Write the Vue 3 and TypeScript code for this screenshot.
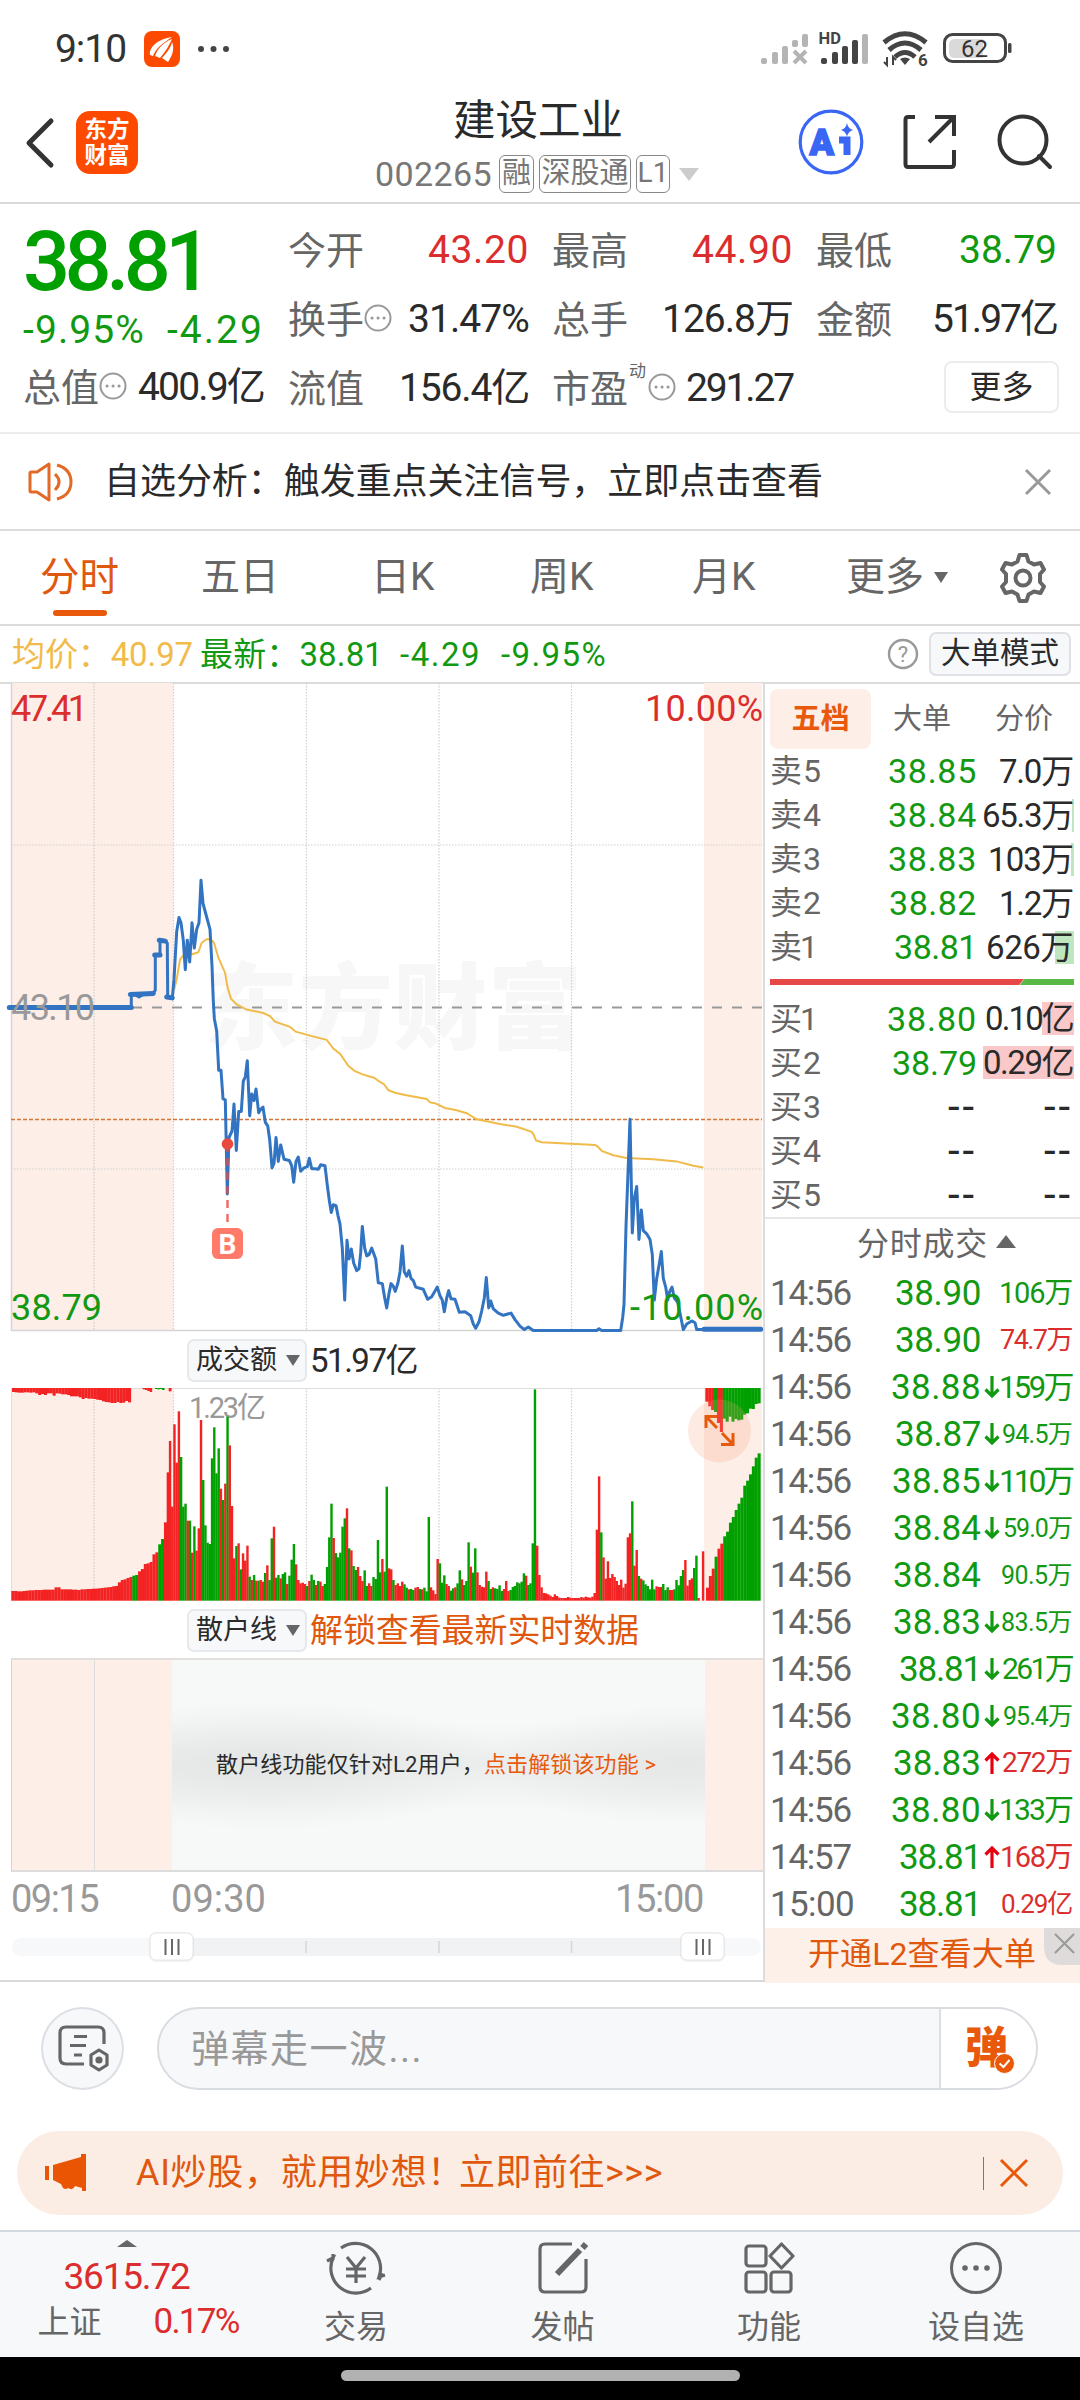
<script setup lang="ts">
import type { Directive } from 'vue'

type Tone = 'up' | 'down' | 'ink'

// Tracks a label out (or in) until it occupies the given width.
const vFit: Directive<HTMLElement, number> = {
  mounted(el, { value }) {
    const range = document.createRange()
    range.selectNodeContents(el)
    const width = range.getBoundingClientRect().width
    const count = (el.textContent ?? '').length
    el.style.letterSpacing = `${((value - width) / count).toFixed(3)}px`
  },
}

interface Stat { label: string; value: string; w: number; tone: Tone; dots?: boolean }
const stats: Stat[] = [
  { label: '今开', value: '43.20', w: 101, tone: 'up' },
  { label: '最高', value: '44.90', w: 101, tone: 'up' },
  { label: '最低', value: '38.79', w: 98, tone: 'down' },
  { label: '换手', value: '31.47%', w: 121, tone: 'ink', dots: true },
  { label: '总手', value: '126.8万', w: 131, tone: 'ink' },
  { label: '金额', value: '51.97亿', w: 125, tone: 'ink' },
]

const tabs = ['分时', '五日', '日K', '周K', '月K', '更多']

interface Level { name: string; price: string; pw: number; vol: string; vw: number; bar: number }
const asks: Level[] = [
  { name: '卖5', price: '38.85', pw: 89, vol: '7.0万', vw: 74, bar: 0 },
  { name: '卖4', price: '38.84', pw: 89, vol: '65.3万', vw: 91, bar: 2 },
  { name: '卖3', price: '38.83', pw: 89, vol: '103万', vw: 85, bar: 3 },
  { name: '卖2', price: '38.82', pw: 88, vol: '1.2万', vw: 74, bar: 0 },
  { name: '卖1', price: '38.81', pw: 83, vol: '626万', vw: 87, bar: 19 },
]
const bids: Level[] = [
  { name: '买1', price: '38.80', pw: 90, vol: '0.10亿', vw: 88, bar: 32 },
  { name: '买2', price: '38.79', pw: 85, vol: '0.29亿', vw: 90, bar: 91 },
  { name: '买3', price: '--', pw: 29, vol: '--', vw: 29, bar: 0 },
  { name: '买4', price: '--', pw: 29, vol: '--', vw: 29, bar: 0 },
  { name: '买5', price: '--', pw: 29, vol: '--', vw: 29, bar: 0 },
]

interface Deal { t: string; p: string; pw: number; dir: '' | 'u' | 'd'; v: string; vw: number; s: number; tone: Tone }
const deals: Deal[] = [
  { t: '14:56', p: '38.90', pw: 86, dir: '', v: '106万', vw: 73, s: 29, tone: 'down' },
  { t: '14:56', p: '38.90', pw: 86, dir: '', v: '74.7万', vw: 72, s: 27, tone: 'up' },
  { t: '14:56', p: '38.88', pw: 90, dir: 'd', v: '159万', vw: 73, s: 31, tone: 'down' },
  { t: '14:56', p: '38.87', pw: 86, dir: 'd', v: '94.5万', vw: 70, s: 25, tone: 'down' },
  { t: '14:56', p: '38.85', pw: 89, dir: 'd', v: '110万', vw: 73, s: 32, tone: 'down' },
  { t: '14:56', p: '38.84', pw: 88, dir: 'd', v: '59.0万', vw: 69, s: 25, tone: 'down' },
  { t: '14:56', p: '38.84', pw: 88, dir: '', v: '90.5万', vw: 71, s: 25, tone: 'down' },
  { t: '14:56', p: '38.83', pw: 88, dir: 'd', v: '83.5万', vw: 71, s: 25, tone: 'down' },
  { t: '14:56', p: '38.81', pw: 82, dir: 'd', v: '261万', vw: 70, s: 30, tone: 'down' },
  { t: '14:56', p: '38.80', pw: 90, dir: 'd', v: '95.4万', vw: 69, s: 25, tone: 'down' },
  { t: '14:56', p: '38.83', pw: 88, dir: 'u', v: '272万', vw: 70, s: 28, tone: 'up' },
  { t: '14:56', p: '38.80', pw: 90, dir: 'd', v: '133万', vw: 73, s: 30, tone: 'down' },
  { t: '14:57', p: '38.81', pw: 82, dir: 'u', v: '168万', vw: 72, s: 29, tone: 'up' },
  { t: '15:00', p: '38.81', pw: 82, dir: '', v: '0.29亿', vw: 71, s: 26, tone: 'up' },
]

// Intraday samples live on a fine integer grid; toPath maps them to chart pixels.
const KX = 3
const KY = 2.306
const toPath = (src: string): string =>
  src.trim().split(/\s+/).map((p, i) => {
    const [x, y] = p.split(',').map(Number)
    return `${i ? 'L' : 'M'}${(x / KX).toFixed(1)} ${(y / KY - 3).toFixed(1)}`
  }).join('')

const pricePath = toPath(`28,755 394,755 394,725 405,725 417,731 430,725 460,722 466,715 466,634 480,634 480,600 492,600
502,607 503,730 517,735 522,690 530,580 537,548 543,560 550,600 556,668 562,600 569,650 576,560 583,618 590,575 597,560
603,462 609,515 616,535 630,575 636,660 640,740 643,780 650,810 656,900 663,900 669,966 676,968 682,1185 687,1055 696,1040
702,978 709,1085 716,995 724,995 730,925 736,915 742,878 749,1005 755,955 762,970 768,943 776,998 782,990 789,985 796,1020
803,1028 809,1060 816,1125 822,1115 828,1055 835,1110 842,1072 852,1105 868,1108 875,1120 881,1158 888,1110 895,1100
902,1133 912,1125 922,1122 928,1103 935,1127 945,1127 955,1128 962,1118 975,1120 982,1165 988,1200 994,1228 1000,1210
1008,1212 1014,1235 1020,1255 1027,1310 1034,1430 1041,1292 1047,1335 1054,1312 1061,1345 1070,1362 1077,1358 1082,1320
1087,1260 1094,1310 1100,1328 1107,1325 1115,1310 1127,1335 1135,1390 1147,1392 1154,1425 1160,1448 1167,1415 1173,1392
1180,1398 1186,1410 1194,1390 1200,1365 1207,1305 1213,1365 1220,1375 1227,1362 1233,1380 1240,1385 1247,1400 1270,1405
1283,1428 1295,1422 1312,1400 1320,1420 1327,1430 1333,1457 1340,1425 1346,1408 1353,1427 1365,1428 1378,1458 1395,1457
1412,1466 1420,1485 1427,1495 1437,1480 1445,1455 1453,1425 1459,1378 1466,1448 1472,1432 1480,1450 1495,1460 1510,1465
1533,1460 1545,1475 1560,1490 1573,1498 1585,1492 1600,1500 1790,1500 1797,1496 1805,1500 1862,1500 1868,1470 1872,1440
1878,1260 1890,1013 1897,1275 1903,1195 1910,1168 1917,1290 1924,1222 1930,1270 1940,1277 1950,1290 1957,1325 1963,1430
1970,1380 1977,1350 1984,1318 1990,1380 1997,1400 2003,1430 2009,1410 2016,1400 2023,1425 2033,1435 2040,1460 2050,1498
2060,1485 2075,1478 2085,1482 2090,1498 2112,1498 2283,1498`)
const auctionPath = toPath('28,755 394,755') + toPath('391,725 460,723') + toPath('464,634 480,634') +
  toPath('478,600 496,602') + toPath('500,731 517,733') + toPath('2112,1497 2282,1497')
const avgPath = toPath(`522,715 530,690 540,645 550,635 575,633 595,628 605,606 620,598 632,598 642,606 655,640 675,675
683,710 693,735 710,748 740,760 790,768 810,775 825,788 870,800 887,811 930,820 980,830 1000,850 1020,862 1045,890
1065,902 1090,910 1122,917 1140,927 1152,932 1165,946 1185,952 1215,957 1280,966 1290,974 1305,976 1335,987 1370,992
1400,999 1430,1013 1500,1024 1550,1030 1595,1042 1602,1050 1608,1062 1625,1066 1785,1072 1793,1076 1805,1086 1840,1096
1880,1102 1960,1105 2030,1110 2080,1120 2110,1124`)

interface Bar { x: number; w: number; y: number; h: number; fill: string }
const RED = '#f32323'
const GREEN = '#00a000'
const BASE = 812
const TOP = 174
function bars(src: string, start: number, pitch: number, hanging = false): Bar[] {
  return src.trim().split(/\s+/).map((code, i) => {
    const v = Number(code.slice(1))
    return {
      x: (start + i * pitch) / 3,
      w: pitch / 3 + 0.2,
      y: hanging ? 0 : (v - TOP) / 3,
      h: (hanging ? v - TOP : BASE - v) / 3,
      fill: code[0] === 'r' ? RED : GREEN,
    }
  })
}
const volume: Bar[] = [
  ...bars(`r783 r783 r784 r784 r783 r782 r781 r781 r780 r780 r780 r779 r779 r779 r779 r772 r772 r778 r778 r778 r778 r779
  r779 r780 r778 r778 r777 r777 r776 r776 r775 r774 r773 r772 r771 r769 r768 r757 r750 r748 r744 r741 g737 g735 r724 r717
  r702 r700 r696 r673 r667 g643 g627 r577`, 34, 8.64),
  ...bars('r427 r333 r530', 500, 6.6),
  ...bars(`r283 r398 r244 g381 g530 g521 r572 g572 r668 g589 r662 r595 r270 g450 g586 g638 g642 g385 g292 g430 g355 r476
  g510 r461 g260 r346 r528 r685 g648 r640 g718 r670 r692 r647 g740 r750 g735 r752 g752 r750 r755 g729 r706 g750 g625 r590
  g743 g735 r745 g732 g727 r762 g737 g689 g642 r703 r750 r760 r758 r762 g768 r753 g734 g750 r765 g753 r755 r768 g762 g711
  g622 g521 r624 g669 g682 g668 g590 g565 r535 g655 r661 g708 g720 r711 r738 r753 g721 g768 r760 r768 g741 g747 g630 g727
  r687 g725 g470 r715 r718 g750 r765 r760 r768 r755 g763 g773 r778 g777 g780 r773 r771 g777 r778 g773 g784 g561 r772 r781
  r792 r687 g700 g758 g736 r762 r768 g782 g775 r772 g760 g721 r748 g765 g753 g637 r710 g728 g655 r727 r765 r770 r772 r725
  g753 g777 r772 g775 g777 g766 g783 r777 r753 r783 g780 g771 g768 g757 g760 g755 g730 r737 g765 g760 g640 g178 r647 r735
  r772 r789 r790 r793 r797 r801 r793 r798 r803 r804 r804 r804 r801 r803 r804 r804 r804 r804 r801 r803 r800 r802 r803 r800
  r789 r599 r439 g607 r682 r746 r694 r744 r732 r741 r753 r765 r749 r773 r761 r622 r610 g514 r707 r660 g738 r746 g751 g763
  g768 g778 g749 g778 r769 r771 r771 g762 g780 g772 r780 r780 g778 g750 g766 g738 g720 r690 r767 r750 r745 g714 g677 r804
  r812 r664`, 519.8, 6.635),
  ...bars(`r773 r738 r716 g680 r656 r641 g619 g605 g578 g561 g540 g521 g503 g467 g452 g433 g409 g383 g370`, 2118, 8.6),
  ...bars(`r186 r187 r188 r188 r187 r187 r188 r187 r190 r195 r192 r195 r190 r190 r197 r190 r191 r193 r193 r195 r199 r199
  r199 r202 r207 r204 r206 r206 r207 r209 r210 r214 r216 r217 r219 r219 r216 r219 r218 r213 r217`, 36, 8.7, true),
  ...bars('r178 r180 r183 r186', 428, 7, true),
  ...bars('g177 g178 g177 g180', 465, 7, true),
  ...bars('r184', 506, 8, true),
  ...bars(`r215 r229 r240 g246 r279 r306 g266 g275 g260 g275 g267 g271 g269 g254 g250 g236 g237 g222 g220`, 2116, 8.7, true),
]
</script>

<template>
  <div class="page">
    <div class="status">
      <span v-fit="71" class="clock">9:10</span>
      <svg class="app-badge" width="36" height="36" viewBox="0 0 36 36">
        <rect width="36" height="36" rx="8" fill="#fe4a00" />
        <path d="M6 24C5 16 14 8 28 6C19 12 12 17 9 25Z" fill="#fff" />
        <path d="M11 25C13 18 20 11 28 8C25 15 21 21 16 27Z" fill="#fff" />
        <path d="M18 27C23 22 27 16 28 11C31 18 28 25 24 31Z" fill="#fff" />
      </svg>
      <svg class="ell" width="33" height="8" viewBox="0 0 33 8" fill="#444"><circle cx="4" cy="4" r="3" /><circle cx="16.500" cy="4" r="3" /><circle cx="29" cy="4" r="3" /></svg>
      <span class="grow"></span>
      <svg width="256" height="50" viewBox="760 25 256 50">
        <g fill="#b4b4b4">
          <rect x="761" y="59" width="6" height="6" rx="2" /><rect x="772" y="53" width="6" height="12" rx="2" />
          <rect x="782" y="47" width="6" height="18" rx="2" /><rect x="792" y="41" width="6" height="7" rx="2" />
          <rect x="802" y="35" width="6" height="13" rx="2" />
          <path d="M794 52L806 64M806 52L794 64" stroke="#b4b4b4" stroke-width="4" />
        </g>
        <text x="818.500" y="45" font-size="16.500" font-weight="700" fill="#444">HD</text>
        <g fill="#444">
          <rect x="821" y="59" width="6" height="6" rx="2" /><rect x="832" y="53" width="6" height="12" rx="2" />
          <rect x="842" y="47" width="6" height="18" rx="2" /><rect x="852" y="41" width="6" height="24" rx="2" />
        </g>
        <rect x="862" y="35" width="6" height="30" rx="2" fill="#b4b4b4" />
        <g fill="none" stroke="#444" stroke-width="5">
          <path d="M884 43.500Q905 26 926 43.500" /><path d="M889 51Q905 37 921 51" /><path d="M895 58Q905 49 915 58" />
        </g>
        <path d="M905 66L900 60Q905 57 910 60Z" fill="#444" />
        <path d="M887 58V66L884 63M893 66V58L896 61" fill="none" stroke="#444" stroke-width="2" />
        <text x="918" y="67" font-size="17" font-weight="700" fill="#444">6</text>
        <rect x="944.500" y="35.500" width="61" height="27" rx="8" fill="none" stroke="#444" stroke-width="3" />
        <path d="M949 46Q949 40 955 40H983V59H955Q949 59 949 53Z" fill="#dadada" />
        <rect x="1008" y="44" width="3.500" height="10" rx="1.500" fill="#444" />
        <text x="961" y="57.500" font-size="24" fill="#333" textLength="27">62</text>
      </svg>
    </div>

    <header class="head">
      <svg class="back" width="32" height="54" viewBox="0 0 32 54"><path d="M28 5L6 27L28 49" fill="none" stroke="#333" stroke-width="5" stroke-linecap="round" stroke-linejoin="round" /></svg>
      <div class="brand"><span>东方</span><span>财富</span></div>
      <div class="title">
        <div class="name">建设工业</div>
        <div class="sub">
          <span v-fit="117" class="code">002265</span>
          <span class="tag t1">融</span><span class="tag t2">深股通</span><span class="tag t3">L1</span>
          <i class="tri-down light"></i>
        </div>
      </div>
      <div class="tools">
        <svg width="66" height="66" viewBox="0 0 66 66">
          <circle cx="33" cy="33" r="30.800" fill="#fff" stroke="#3a66f5" stroke-width="3.200" />
          <text x="11.500" y="46" font-size="36" font-weight="900" fill="#3a66f5" stroke="#3a66f5" stroke-width="1.500">A</text>
          <path d="M41 31H49V46" fill="none" stroke="#3a66f5" stroke-width="7" />
          <path d="M49 14Q50 19.500 55 21Q50 22.500 49 28Q48 22.500 43 21Q48 19.500 49 14Z" fill="#3a66f5" />
        </svg>
        <svg class="share" width="54" height="56" viewBox="0 0 54 56" fill="none" stroke="#333" stroke-width="4">
          <path d="M12 3H5Q2.500 3 2.500 6V50Q2.500 53 5 53H48Q51 53 51 50V36" /><path d="M32 3H51V22M51 3L26 28" />
        </svg>
        <svg width="56" height="56" viewBox="0 0 56 56" fill="none" stroke="#333" stroke-width="4"><circle cx="26" cy="26" r="23.500" /><path d="M42 42L53 53" stroke-linecap="round" /></svg>
      </div>
    </header>

    <section class="quote">
      <div class="last">
        <div v-fit="184" class="big">38.81</div>
        <div class="chg"><span v-fit="122">-9.95%</span><span v-fit="97">-4.29</span></div>
        <div class="cell">
          <span class="lab">总值</span><svg class="more-dots" viewBox="0 0 28 28"><circle cx="14" cy="14" r="12.500" /><path d="M8 14h.1M14 14h.1M20 14h.1" /></svg>
          <span class="grow"></span><span v-fit="126" class="ink">400.9亿</span>
        </div>
      </div>
      <div class="stats">
        <div v-for="s in stats" :key="s.label" class="cell">
          <span class="lab">{{ s.label }}</span>
          <svg v-if="s.dots" class="more-dots" viewBox="0 0 28 28"><circle cx="14" cy="14" r="12.500" /><path d="M8 14h.1M14 14h.1M20 14h.1" /></svg>
          <span class="grow"></span><span v-fit="s.w" :class="s.tone">{{ s.value }}</span>
        </div>
        <div class="cell"><span class="lab">流值</span><span class="grow"></span><span v-fit="130" class="ink">156.4亿</span></div>
        <div class="cell">
          <span class="lab">市盈</span><sup>动</sup><svg class="more-dots" viewBox="0 0 28 28"><circle cx="14" cy="14" r="12.500" /><path d="M8 14h.1M14 14h.1M20 14h.1" /></svg>
          <span class="grow"></span><span v-fit="107" class="ink">291.27</span>
        </div>
        <div class="cell end"><button class="more">更多</button></div>
      </div>
    </section>

    <section class="notice">
      <svg width="46" height="40" viewBox="0 0 46 40" fill="none" stroke="#e26a26" stroke-width="3">
        <path d="M2 11V29Q2 30 3.500 30H9L21 38V2L9 10H3.500Q2 10 2 11Z" stroke-linejoin="round" /><path d="M27 12Q35 20 27 28M29 3Q43 7 43 20Q43 33 29 37" />
      </svg>
      <span v-fit="719" class="msg">自选分析：触发重点关注信号，立即点击查看</span>
      <svg class="x" width="28" height="28" viewBox="0 0 28 28"><path d="M2 2L26 26M26 2L2 26" stroke="#999" stroke-width="3" /></svg>
    </section>

    <nav class="tabs">
      <span v-for="(t, i) in tabs" :key="t" class="tab" :class="{ on: i === 0 }">{{ t }}<i v-if="i === 5" class="tri-down"></i></span>
      <svg width="52" height="52" viewBox="0 0 52 52" fill="none" stroke="#666" stroke-width="4" stroke-linejoin="round">
        <path d="M22.500 3H29.500L31.500 9.500L37 12.500L43.500 11L47 17.500L43 22V30L47 34.500L43.500 41L37 39.500L31.500 42.500L29.500 49H22.500L20.500 42.500L15 39.500L8.500 41L5 34.500L9 30V22L5 17.500L8.500 11L15 12.500L20.500 9.500Z" /><circle cx="26" cy="26" r="7.500" />
      </svg>
    </nav>

    <section class="info">
      <span v-fit="181" class="avg">均价：40.97</span>
      <span v-fit="183" class="down b1">最新：38.81</span>
      <span v-fit="81" class="down b2">-4.29</span>
      <span v-fit="106" class="down b3">-9.95%</span>
      <span class="grow"></span>
      <svg width="32" height="32" viewBox="0 0 32 32"><circle cx="16" cy="16" r="14" fill="none" stroke="#999" stroke-width="2.400" /><text x="16" y="24" font-size="22" text-anchor="middle" fill="#999">?</text></svg>
      <button class="mode">大单模式</button>
    </section>

    <main class="body">
      <div class="left">
        <svg class="block" width="763" height="650" viewBox="0 -1 763 650">
          <rect x="11" y="0" width="162" height="647" fill="#fdeee7" /><rect x="704" y="0" width="58" height="647" fill="#fdeee7" />
          <text x="204" y="359" font-size="94" font-weight="900" fill="#f7f7f7" textLength="378">东方财富</text>
          <g stroke="#cfcfcf" stroke-width="1.200" stroke-dasharray="1.500 1.500">
            <path d="M94 0V647M173.500 0V647M306.500 0V647M439 0V647M571.500 0V647M11 162H762M11 486H762" />
          </g>
          <path d="M11.500 0V648M11 647.500H763" stroke="#d5d5d5" stroke-width="1.500" />
          <path d="M132 324.500H762" stroke="#999" stroke-width="2" stroke-dasharray="10 10" />
          <path d="M11 436.500H762" stroke="#d4763a" stroke-width="1.500" stroke-dasharray="4 2" />
          <path :d="avgPath" fill="none" stroke="#f0bb4b" stroke-width="2" />
          <path :d="pricePath" fill="none" stroke="#3274c2" stroke-width="3" stroke-linejoin="round" />
          <path :d="auctionPath" fill="none" stroke="#3274c2" stroke-width="5" stroke-linecap="round" />
          <path d="M227.500 461V539" stroke="#ea4a3c" stroke-opacity=".8" stroke-width="2.500" stroke-dasharray="8 6" />
          <circle cx="227.500" cy="461" r="5.800" fill="#ea4a3c" />
          <rect x="212" y="545" width="31" height="31" rx="6" fill="#ff7a68" />
          <text x="227.500" y="571" font-size="28" font-weight="700" fill="#fff" text-anchor="middle">B</text>
          <g font-size="36">
            <text x="11" y="38" fill="#db2d2d" textLength="77">47.41</text><text x="645" y="38" fill="#db2d2d" textLength="118">10.00%</text>
            <text x="11" y="337" fill="#999" textLength="84">43.10</text>
            <text x="11" y="637" fill="#129912" textLength="91">38.79</text><text x="630" y="637" fill="#129912" textLength="133">-10.00%</text>
          </g>
        </svg>
        <div class="bar-head"><button class="pick">成交额<i class="tri-down"></i></button><span v-fit="107" class="ink">51.97亿</span></div>
        <svg class="block" width="763" height="214" viewBox="0 0 763 214">
          <rect x="11" y="0" width="162" height="213" fill="#fdeee7" /><rect x="704" y="0" width="58" height="213" fill="#fdeee7" />
          <path d="M94 0V213M173.500 0V213M306.500 0V213M439 0V213M571.500 0V213" stroke="#cfcfcf" stroke-width="1.200" stroke-dasharray="1.500 1.500" />
          <path d="M11 .5H762M11.500 0V213" stroke="#ddd" />
          <text x="189" y="30" font-size="29" fill="#999" textLength="77">1.23亿</text>
          <rect v-for="(b, i) in volume" :key="i" :x="b.x" :y="b.y" :width="b.w" :height="b.h" :fill="b.fill" />
          <circle cx="719.500" cy="43" r="31.500" fill="#f7a17c" fill-opacity=".22" />
          <path d="M717 28.500H706V40M706 28.500L717 40M722 45L733 56.500M733 45V56.500H721" fill="none" stroke="#e65a0c" stroke-width="3" />
        </svg>
        <div class="bar-head"><button class="pick">散户线<i class="tri-down"></i></button><span v-fit="329" class="unlock">解锁查看最新实时数据</span></div>
        <div class="locked">
          <i class="pink a"></i>
          <p><span v-fit="268">散户线功能仅针对L2用户，</span><b v-fit="172">点击解锁该功能 &gt;</b></p>
          <i class="pink b"></i>
        </div>
        <div class="axis"><span v-fit="87">09:15</span><span v-fit="95" class="mid">09:30</span><span v-fit="88" class="endt">15:00</span></div>
        <svg class="block" width="763" height="60" viewBox="0 1921 763 60">
          <rect x="12" y="1938" width="749" height="18" rx="9" fill="#f7f8fa" /><rect x="172" y="1938" width="532" height="18" fill="#f1f2f4" />
          <path d="M306 1941V1953M439 1941V1953M571.500 1941V1953" stroke="#d5d6d9" stroke-width="1.500" />
          <g v-for="x in [150, 681]" :key="x">
            <rect :x="x - 1" y="1932" width="45" height="30" rx="7" fill="#000" fill-opacity=".05" />
            <rect :x="x" y="1933" width="43" height="27" rx="6" fill="#fff" stroke="#e6e6e8" />
            <path :d="`M${x + 15.5} 1939V1955M${x + 22} 1939V1955M${x + 28.5} 1939V1955`" stroke="#666" stroke-width="2" />
          </g>
        </svg>
      </div>

      <aside class="right">
        <div class="seg"><b>五档</b><span>大单</span><span>分价</span></div>
        <div class="book">
          <div v-for="l in asks" :key="l.name" class="lv">
            <span v-fit="l.name === '卖1' ? 46 : 52" class="lab2">{{ l.name }}</span><span v-fit="l.pw" class="pr down">{{ l.price }}</span>
            <i class="depth g" :style="{ width: l.bar + 'px' }"></i><span v-fit="l.vw" class="vo">{{ l.vol }}</span>
          </div>
        </div>
        <svg class="ratio" width="304" height="6" viewBox="0 0 304 6"><path d="M0 0H254L249 6H0Z" fill="#e64747" /><path d="M254.500 0H304V6H249.500Z" fill="#5ab946" /></svg>
        <div class="book">
          <div v-for="l in bids" :key="l.name" class="lv">
            <span v-fit="l.name === '买1' ? 46 : 52" class="lab2">{{ l.name }}</span><span v-fit="l.pw" class="pr" :class="l.price === '--' ? 'ink dash' : 'down'">{{ l.price }}</span>
            <i class="depth r" :style="{ width: l.bar + 'px' }"></i><span v-fit="l.vw" class="vo" :class="{ dash: l.vol === '--' }">{{ l.vol }}</span>
          </div>
        </div>
        <div class="deal-head"><span v-fit="131">分时成交</span><i class="tri-up"></i></div>
        <div v-for="(d, i) in deals" :key="i" class="deal">
          <span v-fit="d.t === '15:00' ? 84 : 81" class="tm">{{ d.t }}</span><span v-fit="d.pw" class="pr down">{{ d.p }}</span>
          <svg width="18" height="24" viewBox="0 0 18 24" fill="none" stroke-width="3.200">
            <path v-if="d.dir === 'd'" d="M9 1V21M2.500 14.500L9 21L15.500 14.500" stroke="#129912" />
            <path v-if="d.dir === 'u'" d="M9 23V3M2.500 9.500L9 3L15.500 9.500" stroke="#e60012" />
          </svg>
          <span v-fit="d.vw" class="dv" :class="d.tone" :style="{ fontSize: d.s + 'px' }">{{ d.v }}</span>
        </div>
        <div class="promo"><span v-fit="228">开通L2查看大单</span>
          <svg class="promo-x" width="36" height="37" viewBox="0 0 36 37"><path d="M0 0H36V37H18Q0 37 0 18Z" fill="#dedbda" /><path d="M11 6L30 25M30 6L11 25" stroke="#999" stroke-width="2" /></svg>
        </div>
      </aside>
    </main>

    <section class="chat">
      <div class="round">
        <svg width="54" height="50" viewBox="0 0 54 50" fill="none" stroke="#666" stroke-width="3.200">
          <path d="M47 20V9Q47 3 41 3H9Q3 3 3 9V34Q3 40 9 40H27" /><path d="M17 12.500H30M13 21.500H29M17 31H25" />
          <path d="M42 26L50 31V41L42 46L34 41V31Z" stroke-linejoin="round" /><circle cx="42" cy="36" r="2" fill="#666" />
        </svg>
      </div>
      <div class="field">
        <span v-fit="232" class="ph">弹幕走一波...</span>
        <span class="send"><b>弹</b><svg width="21" height="21" viewBox="0 0 21 21"><circle cx="10.500" cy="10.500" r="10" fill="#e8590c" stroke="#fff" /><path d="M5.500 10.500L9.500 14L15.500 7" fill="none" stroke="#fff" stroke-width="2" /></svg></span>
      </div>
    </section>

    <section class="banner">
      <svg width="42" height="38" viewBox="0 0 42 38" fill="#ea5504"><rect x="0" y="12" width="4" height="14" /><path d="M8 11L36 3V0H41V37H37V34L30 32Q28 37 23 34Q21 36 18 34L16 30L8 26Z" /></svg>
      <span class="bt"><span v-fit="328">AI炒股，就用妙想！</span><span v-fit="204">立即前往&gt;&gt;&gt;</span></span>
      <i class="vline"></i>
      <svg width="30" height="30" viewBox="0 0 30 30"><path d="M2 2L28 28M28 2L2 28" stroke="#e8590c" stroke-width="3" /></svg>
    </section>

    <footer class="foot">
      <div class="index">
        <i class="tri-up sm"></i>
        <span v-fit="126" class="up pt">3615.72</span>
        <div class="ix"><span>上证</span><span v-fit="85" class="up">0.17%</span></div>
      </div>
      <div class="item">
        <svg width="62" height="56" viewBox="0 0 62 56" fill="none" stroke="#666" stroke-width="3.200">
          <path d="M16 8A25 25 0 0 1 54 37L60 35M54 40L57 33M46 48A25 25 0 0 1 8 18L2 21M8 14L8 20" /><path d="M22 17L31 28L40 17M31 28V43M21 29H41M21 36H41" />
        </svg><span>交易</span>
      </div>
      <div class="item">
        <svg width="52" height="56" viewBox="0 0 52 56" fill="none" stroke="#666" stroke-width="3.200">
          <path d="M35 4H8Q3 4 3 9V47Q3 52 8 52H44Q49 52 49 47V19" /><path d="M20 34L43 10" stroke-width="6" /><path d="M45.500 8L49 4" stroke-width="6" />
        </svg><span>发帖</span>
      </div>
      <div class="item">
        <svg width="52" height="56" viewBox="0 0 52 56" fill="none" stroke="#666" stroke-width="3.200" stroke-linejoin="round">
          <rect x="3" y="6" width="20" height="20" rx="3" /><rect x="3" y="32" width="20" height="20" rx="3" /><rect x="28" y="32" width="20" height="20" rx="3" /><path d="M38.500 4L50 16L38.500 28L27 16Z" />
        </svg><span>功能</span>
      </div>
      <div class="item">
        <svg width="54" height="56" viewBox="0 0 54 56"><circle cx="27" cy="28" r="24.500" fill="none" stroke="#666" stroke-width="3" /><g fill="#666"><circle cx="16" cy="28" r="2.800" /><circle cx="27" cy="28" r="2.800" /><circle cx="38" cy="28" r="2.800" /></g></svg><span>设自选</span>
      </div>
    </footer>
    <div class="gesture"><i></i></div>
  </div>
</template>

<style>
body { margin: 0; background: #fff; }
</style>

<style scoped>
.page { width: 1080px; height: 2400px; overflow: hidden; display: flex; flex-direction: column; background: #fff; font-family: Roboto, "Noto Sans CJK SC", sans-serif; color: #2a2a2a; line-height: 1; white-space: nowrap; box-sizing: border-box; }
.page * { box-sizing: border-box; }
.page > * { flex: none; }
button { font: inherit; color: inherit; padding: 0; white-space: nowrap; line-height: 1; }
i { font-style: normal; display: block; flex: none; }
svg { flex: none; }
.block { display: block; }
.grow { flex: 1; }
.up { color: #db2d2d; }
.down { color: #129912; }
.ink { color: #2a2a2a; }
.tri-down { width: 0; height: 0; border: 7px solid transparent; border-top: 11px solid #666; border-bottom: 0; }
.tri-down.light { border-width: 13px 10px 0; border-top-color: #ccc; margin-left: 9px; }
.tri-up { width: 0; height: 0; border: 10px solid transparent; border-bottom: 13px solid #666; border-top: 0; }

.status { height: 98px; padding: 0 64px 0 55px; display: flex; align-items: center; }
.clock { font-size: 39px; color: #333; }
.app-badge { margin-left: 18px; }
.ell { margin-left: 17px; }

.head { height: 106px; border-bottom: 2px solid #d9d9d9; display: flex; align-items: center; padding: 0 27px 16px 23px; }
.back { margin-top: 1px; }
.brand { margin: 0 0 0 21px; width: 62px; height: 63px; border-radius: 14px; background: #fe4a00; color: #fff; font-weight: 700; font-size: 22.5px; line-height: 26px; display: flex; flex-direction: column; align-items: center; justify-content: center; }
.title { margin-left: 237px; width: 324px; padding-top: 9px; }
.name { margin-left: 78px; font-size: 42.5px; line-height: 44px; }
.sub { display: flex; align-items: center; margin-top: 11px; height: 40px; color: #777; }
.code { font-size: 34px; width: 124px; }
.tag { border: 1.5px solid #888; border-radius: 6px; height: 38px; font-size: 29px; line-height: 34px; text-align: center; margin-right: 5px; flex: none; }
.t1 { width: 35px; } .t2 { width: 92px; } .t3 { width: 34px; }
.tag.t3 { font-size: 28px; margin-right: 0; }
.tools { margin-left: auto; display: flex; align-items: center; }
.share { margin: 0 40px 0 39px; }

.quote { height: 230px; border-bottom: 2px solid #ececec; display: flex; font-size: 39px; }
.last { width: 288px; padding: 22px 24px 0 23px; color: #00a000; }
.big { font-size: 83px; font-weight: 500; line-height: 72px; height: 81px; }
.chg { display: flex; justify-content: space-between; height: 46px; line-height: 46px; color: #129912; }
.cell { display: flex; align-items: center; height: 69px; }
.lab { color: #666; font-size: 38px; }
.more-dots { width: 28px; height: 28px; margin: -4px 0 0 0; fill: none; stroke: #999; stroke-width: 2; }
.more-dots path { stroke-width: 3; stroke-linecap: round; }
.stats { display: grid; grid-template-columns: 241px 241px 241px; column-gap: 23px; padding-top: 12px; grid-auto-rows: 69px; }
.stats sup { font-size: 17px; color: #666; align-self: flex-start; margin: 9px 2px 0 1px; line-height: 17px; }
.end { justify-content: flex-end; }
.more { width: 115px; height: 52px; margin: -3px -2px 0 0; border: 2px solid #ececec; border-radius: 8px; background: #fff; font-size: 32px; }

.notice { height: 97px; border-bottom: 2px solid #dcdcdc; display: flex; align-items: center; padding: 0 28px 0 28px; }
.msg { margin-left: 30px; font-size: 36px; }
.x { margin-left: auto; }

.tabs { height: 95px; border-bottom: 2px solid #dcdcdc; display: grid; grid-template-columns: 161px 170px 159px 162px 154px 151px 52px; padding-left: 40px; align-items: center; font-size: 39px; color: #666; }
.tab { height: 93px; display: flex; align-items: center; position: relative; }
.tab .tri-down { margin: 0 0 0 10px; }
.tab.on { color: #e0570e; font-size: 39.5px; }
.tab.on::after { content: ""; position: absolute; left: 13px; bottom: 8px; width: 54px; height: 6px; border-radius: 3px; background: #e8590c; }

.info { height: 58px; border-bottom: 2px solid #dcdcdc; display: flex; align-items: center; font-size: 33px; padding: 0 9px 0 12px; }
.avg { color: #f0bb4b; }
.b1 { margin-left: 7px; } .b2 { margin-left: 17px; } .b3 { margin-left: 20px; }
.mode { width: 142px; height: 44px; border: 2px solid #dfe1e6; border-radius: 7px; background: #f7f8fa; font-size: 29.5px; margin-left: 10px; }

.body { display: flex; height: 1300px; border-bottom: 2px solid #d9d9d9; margin-top: -2px; }
.left { width: 763px; }
.bar-head { height: 56px; display: flex; align-items: center; padding-left: 187px; font-size: 33px; }
.pick { width: 120px; height: 43px; border: 2px solid #e6e8ec; border-radius: 7px; background: #f7f8fa; font-size: 27px; display: flex; align-items: center; padding-left: 7px; margin-right: 3px; }
.pick .tri-down { margin-left: 9px; }
.unlock { color: #e0570e; }
.locked { height: 214px; display: flex; border-top: 2px solid #e3dedc; border-bottom: 2px solid #dcdcdc; margin-left: 11px; border-left: 1px solid #d5d5d5; }
.pink { background: #fdeee7; }
.pink.a { width: 160px; background-image: linear-gradient(90deg, transparent 82px, #ddd 82px, #ddd 83px, transparent 83px); }
.pink.b { width: 58px; }
.locked p { margin: 0; width: 533px; display: flex; align-items: center; padding-left: 44px; font-size: 22px; background: radial-gradient(ellipse 240px 65px at 18% 50%, #e4e6e6, transparent), radial-gradient(ellipse 200px 60px at 96% 50%, #e6e8e8, transparent), linear-gradient(#f7f8f8 30%, #eceeee 50%, #f7f8f8 72%); }
.locked b { font-weight: 400; color: #e8590c; }
.axis { display: grid; grid-template-columns: 160px 444px auto; padding-left: 11px; height: 49px; font-size: 38px; line-height: 54px; color: #999; }

.right { width: 317px; border-left: 2px solid #dcdcdc; padding-left: 5px; display: flex; flex-direction: column; }
.right > * { flex: none; }
.seg { display: flex; height: 67px; padding-top: 7px; line-height: 60px; font-size: 29px; color: #666; }
.seg b { width: 101px; height: 60px; text-align: center; border-radius: 8px; background: #fdeee7; color: #e8590c; font-weight: 700; }
.seg span { width: 102px; text-align: center; }
.book { display: flex; flex-direction: column; }
.lv { height: 44.1px; display: grid; grid-template-columns: 80px 127px 97px; align-items: center; font-size: 34px; }
.lab2 { color: #666; font-size: 32px; }
.pr { text-align: right; justify-self: end; }
.vo { text-align: right; justify-self: end; grid-column: 3; grid-row: 1; position: relative; margin-right: 1px; font-size: 33px; }
.dash { font-size: 42px; }
.depth { grid-column: 3; grid-row: 1; justify-self: end; height: 33px; }
.depth.g { background: #bfe6bf; }
.depth.r { background: #fac8c8; }
.ratio { margin: 10px 0 11px; }
.deal-head { border-top: 2px solid #e6e6e6; height: 53px; margin-left: -5px; display: flex; align-items: center; padding-left: 92px; font-size: 32px; color: #666; }
.deal-head .tri-up { margin-left: 8px; margin-top: -5px; }
.deal { height: 47px; display: grid; grid-template-columns: 90px 121px 21px 70px; align-items: center; font-size: 35px; }
.deal svg { justify-self: center; }
.tm { color: #666; }
.dv { justify-self: end; }
.promo { height: 55px; margin: 0 0 0 -5px; background: #fdf0e9; color: #e0570e; font-size: 32px; line-height: 52px; padding-left: 43px; position: relative; }
.promo-x { position: absolute; right: 0; top: 0; }

.chat { height: 150px; display: flex; padding: 25px 42px 0 41px; }
.round { width: 83px; height: 83px; border-radius: 50%; border: 2px solid #dcdfe5; background: #f7f8fa; display: flex; align-items: center; justify-content: center; }
.round svg { margin-left: 3px; }
.field { margin-left: 33px; width: 882px; height: 83px; border-radius: 42px; border: 2px solid #d9dce1; background: #f7f8fa; display: flex; overflow: hidden; align-items: center; }
.ph { padding-left: 32px; font-size: 38px; color: #999; flex: 1; }
.send { width: 97px; height: 80px; border-left: 2px solid #dcdfe5; background: #fff; display: flex; align-items: center; padding-left: 24px; color: #e8590c; }
.send b { font-size: 43px; font-weight: 900; }
.send svg { margin: 30px 0 0 -14px; }

.banner { width: 1046px; height: 84px; margin: -1px 17px 0; border-radius: 42px; background: #fcede4; display: flex; align-items: center; padding: 0 34px 0 28px; color: #e0570e; }
.bt { font-size: 36px; margin-left: 49px; flex: 1; display: flex; }
.bt span:last-child { margin-left: -5px; }
.vline { width: 1.5px; height: 33px; background: #e0570e; margin-right: 15px; }

.foot { height: 127px; margin-top: 15px; border-top: 2px solid #d3d9e0; background: #f7f8fa; display: grid; grid-template-columns: 253px 206px 207px 206px 208px; color: #666; }
.index { display: flex; flex-direction: column; align-items: center; padding-top: 8px; }
.tri-up.sm { border-width: 0 10px 7px; }
.pt { font-size: 37px; margin-top: 11px; }
.ix { display: flex; width: 201px; margin: 8px 0 0 23px; justify-content: space-between; align-items: center; font-size: 35px; height: 37px; }
.ix span:first-child { font-size: 32px; }
.item { display: flex; flex-direction: column; align-items: center; padding-top: 8px; font-size: 32px; }
.item span { margin-top: 15px; }
.gesture { height: 44px; background: #000; display: flex; justify-content: center; padding-top: 13px; }
.gesture i { width: 399px; height: 11px; border-radius: 6px; background: #b1b1b1; }
</style>
